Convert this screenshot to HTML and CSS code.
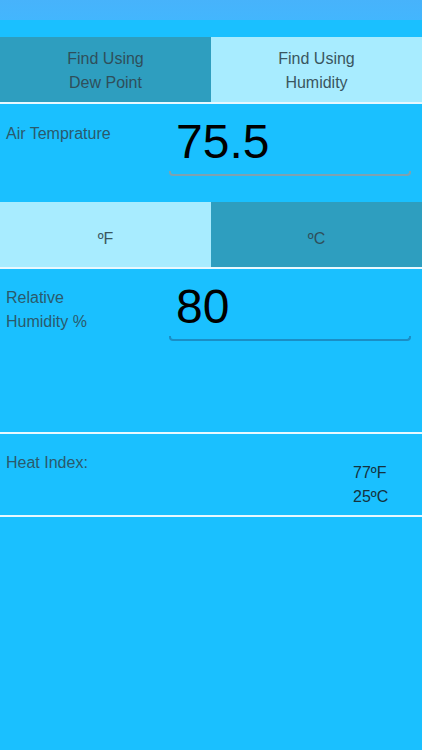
FILE: index.html
```html
<!DOCTYPE html>
<html>
<head>
<meta charset="utf-8">
<link rel="stylesheet" href="styles.css">
</head>
<body>
<div class="status"></div>
<div class="navgap"></div>
<div class="seg">
  <div class="seg-item dark">Find Using<br>Dew Point</div>
  <div class="seg-item light">Find Using<br>Humidity</div>
</div>
<div class="rule"></div>
<div class="section air">
  <div class="label air-label">Air Temprature</div>
  <div class="field">
    <div class="num">75.5</div>
    <div class="underline gray"></div>
  </div>
</div>
<div class="seg units">
  <div class="seg-item light">ºF</div>
  <div class="seg-item dark">ºC</div>
</div>
<div class="rule"></div>
<div class="section hum">
  <div class="label hum-label">Relative<br>Humidity %</div>
  <div class="field">
    <div class="num">80</div>
    <div class="underline blue"></div>
  </div>
</div>
<div class="rule"></div>
<div class="section heat">
  <div class="label heat-label">Heat Index:</div>
  <div class="heat-vals">77ºF<br>25ºC</div>
</div>
<div class="rule"></div>
</body>
</html>
```
FILE: styles.css
```css
html, body {
  margin: 0;
  padding: 0;
}
body {
  width: 422px;
  min-height: 750px;
  background: #1ac0ff;
  font-family: "Liberation Sans", Arial, sans-serif;
  font-size: 16px;
}
.status {
  height: 20px;
  background: linear-gradient(#47b3fb, #43b6fd);
}
.navgap {
  height: 17px;
  background: #1ac0ff;
}
.seg {
  display: flex;
  height: 65px;
}
.seg-item {
  flex: 1;
  display: flex;
  align-items: center;
  justify-content: center;
  text-align: center;
  line-height: 24px;
  padding-top: 2px;
  box-sizing: border-box;
  color: #3a5660;
}
.units .seg-item {
  padding-top: 9px;
}
.seg-item.dark {
  background: #2e9ebf;
  color: #2f4f5b;
}
.seg-item.light {
  background: #a8ecff;
}
.rule {
  height: 2px;
  background: #e8f8ff;
}
.section {
  display: flex;
  box-sizing: border-box;
}
.air {
  height: 98px;
  padding-top: 14px;
}
.hum {
  height: 163px;
  padding-top: 14px;
}
.heat {
  height: 81px;
  padding-top: 17px;
}
.label {
  width: 163px;
  padding-left: 6px;
  line-height: 24px;
  color: #2a5a6c;
}
.air-label {
  margin-top: 4px;
}
.hum-label {
  margin-top: 3px;
}
.field {
  width: 242px;
}
.num {
  font-size: 48px;
  line-height: 48px;
  padding-left: 7px;
  color: #000;
}
.underline {
  margin-top: 5px;
  height: 3px;
  border: 2px solid;
  border-top: none;
  border-radius: 0 0 4px 4px;
}
.underline.gray {
  border-color: #7ea2b1;
}
.underline.blue {
  border-color: #1a8ec6;
}
.heat-vals {
  margin-left: 184px;
  margin-top: 10px;
  line-height: 24px;
  color: #15323d;
}
```
